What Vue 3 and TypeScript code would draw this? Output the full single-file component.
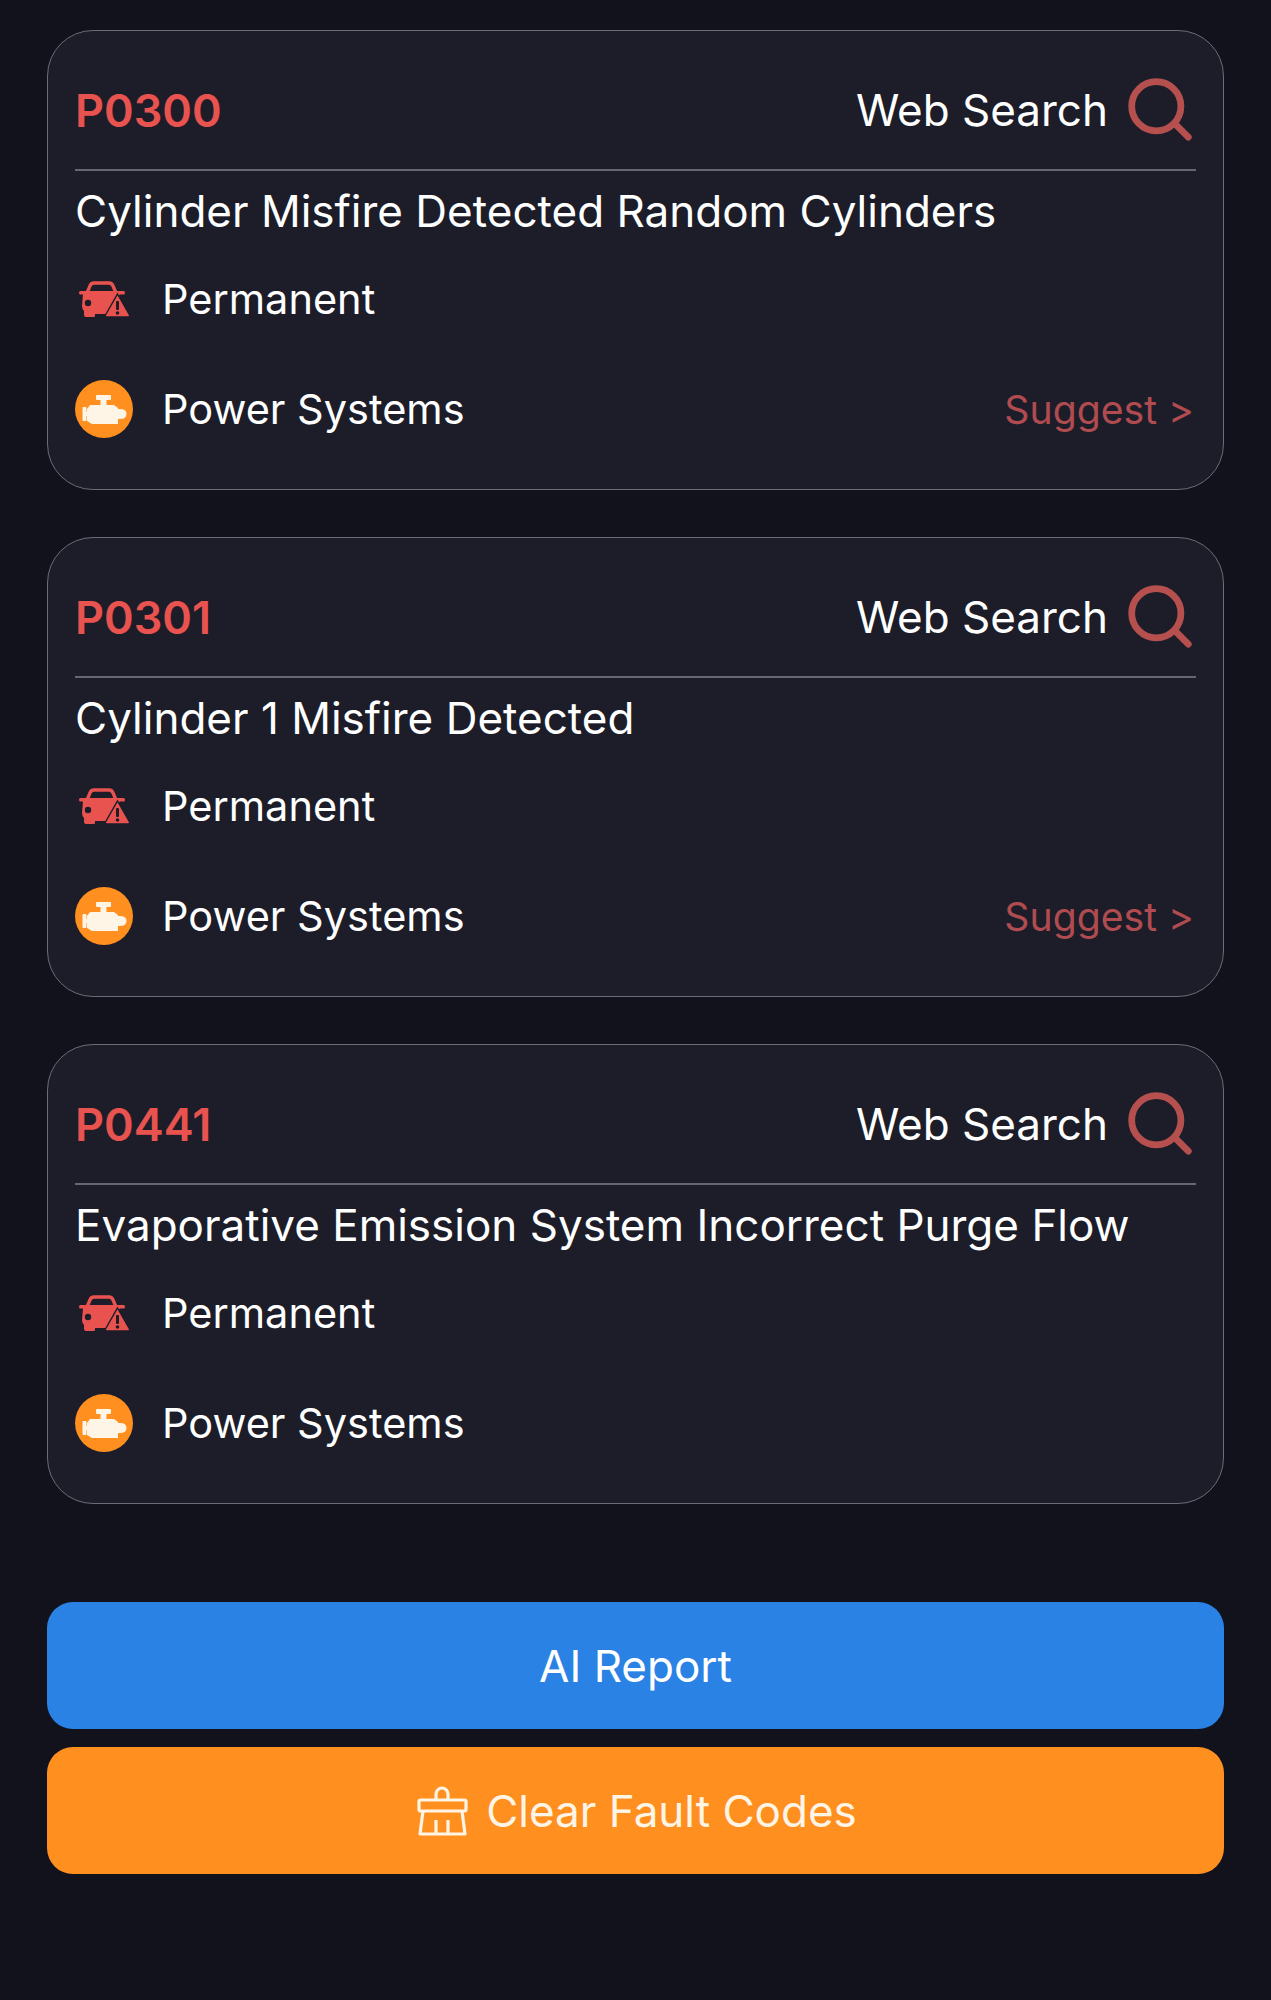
<template>
  <div class="page">
    <div v-for="item in faults" :key="item.code" class="card">
      <div class="head">
        <span class="code">{{ item.code }}</span>
        <div class="search">
          <span>Web Search</span>
          <svg class="search-icon" viewBox="0 0 52 52" fill="none" stroke="#b5504f" stroke-width="5.5" stroke-linecap="round">
            <circle cx="23" cy="23" r="20" />
            <path d="M38 37 L49 48" />
          </svg>
        </div>
      </div>
      <div class="desc">{{ item.desc }}</div>
      <div class="row status">
        <svg class="icon car" viewBox="0 0 50 36">
          <path d="M8 12 L11 5 Q12 2 15 2 H30 Q33 2 34 5 L37 12" fill="none" stroke="#e85350" stroke-width="3.4" />
          <rect x="0" y="10" width="46" height="3.4" rx="1.5" fill="#e85350" />
          <path d="M4 13 H41 L28 33 H16 V35 Q16 36 15 36 H7 Q5 36 5 34 V30 Q3 28 3 25 Z" fill="#e85350" />
          <circle cx="9" cy="22" r="3.2" fill="#1c1d29" />
          <path d="M38.5 13 L50.5 34 Q51 36 48.5 36 H28 Q25.5 36 26.5 34 Z" fill="#e85350" stroke="#1c1d29" stroke-width="1.4" />
          <rect x="37" y="20" width="3" height="9" rx="1" fill="#1c1d29" />
          <circle cx="38.5" cy="32" r="1.8" fill="#1c1d29" />
        </svg>
        <span class="label">Permanent</span>
      </div>
      <div class="row system">
        <svg class="icon engine" viewBox="0 0 58 58">
          <circle cx="29" cy="29" r="29" fill="#ff8f1f" />
          <g fill="#fff5e6">
            <rect x="21" y="15" width="15" height="5" rx="1" />
            <rect x="25.5" y="19" width="6" height="7" />
            <path d="M15 25 H39 L43 28 V44 H17 L12 41 V29 Z" />
            <rect x="7.5" y="27" width="4" height="14" rx="1" />
            <rect x="10" y="32" width="4" height="4" />
            <path d="M42 29 H45 Q51.5 29 51.5 34 Q51.5 39 45 39 H42 Z" />
          </g>
        </svg>
        <span class="label">Power Systems</span>
        <span v-if="item.suggest" class="suggest">Suggest &gt;</span>
      </div>
    </div>

    <div class="actions">
      <button class="btn blue">AI Report</button>
      <button class="btn orange">
        <svg class="broom" viewBox="0 0 52 52" fill="none" stroke="#fff5e6" stroke-width="3.2" stroke-linejoin="round">
          <path d="M19 15 V9 a6 6 0 0 1 12 0 V15" />
          <rect x="2" y="15" width="47" height="11" rx="1.5" />
          <path d="M6 26 L3 49 H48 L45 26" />
          <path d="M19 35 V49 M31 35 V49" />
        </svg>
        <span>Clear Fault Codes</span>
      </button>
    </div>
  </div>
</template>

<script setup lang="ts">
interface Fault {
  code: string
  desc: string
  suggest: boolean
}

const faults: Fault[] = [
  { code: 'P0300', desc: 'Cylinder Misfire Detected Random Cylinders', suggest: true },
  { code: 'P0301', desc: 'Cylinder 1 Misfire Detected', suggest: true },
  { code: 'P0441', desc: 'Evaporative Emission System Incorrect Purge Flow', suggest: false },
]
</script>

<style>
html, body {
  background: #11121c;
}
</style>

<style scoped>
.page {
  box-sizing: border-box;
  width: 1271px;
  height: 2000px;
  padding: 30px 47px 0;
  background: #11121c;
  font-family: Inter, "Liberation Sans", sans-serif;
  color: #fff;
  overflow: hidden;
}

.card {
  box-sizing: border-box;
  height: 460px;
  margin-bottom: 47px;
  padding: 0 27px;
  background: #1c1d29;
  border: 1.5px solid #6b6c75;
  border-radius: 46px;
}

.head {
  box-sizing: border-box;
  height: 140px;
  padding-top: 20px;
  display: flex;
  align-items: center;
  justify-content: space-between;
  border-bottom: 2px solid #66676f;
}

.code {
  font-size: 45px;
  font-weight: 600;
  color: #e85350;
}

.search {
  display: flex;
  align-items: center;
  gap: 20px;
  font-size: 44px;
}

.search-icon {
  width: 64px;
  height: 64px;
  margin-right: 4px;
}

.desc {
  height: 83px;
  line-height: 81px;
  font-size: 44px;
  white-space: nowrap;
}

.row {
  display: flex;
  align-items: center;
  height: 58px;
  font-size: 41.5px;
}

.status {
  margin-top: 16px;
}

.system {
  margin-top: 52px;
}

.icon {
  flex: none;
}

.car {
  width: 50px;
  height: 36px;
  margin-left: 4px;
  margin-right: 33px;
}

.engine {
  width: 58px;
  height: 58px;
  margin-right: 29px;
}

.suggest {
  margin-left: auto;
  margin-right: 2px;
  font-size: 39.2px;
  color: #b04b50;
}

.actions {
  margin-top: 98px;
  display: flex;
  flex-direction: column;
  gap: 18px;
}

.btn {
  height: 127px;
  border: none;
  border-radius: 26px;
  color: #fff;
  font-family: inherit;
  font-size: 44px;
  display: flex;
  align-items: center;
  justify-content: center;
  gap: 17px;
}

.blue {
  background: #2a82e4;
}

.orange {
  background: #ff8f1f;
  color: #fff5e6;
  padding-left: 9px;
}

.broom {
  width: 52px;
  height: 52px;
}
</style>
